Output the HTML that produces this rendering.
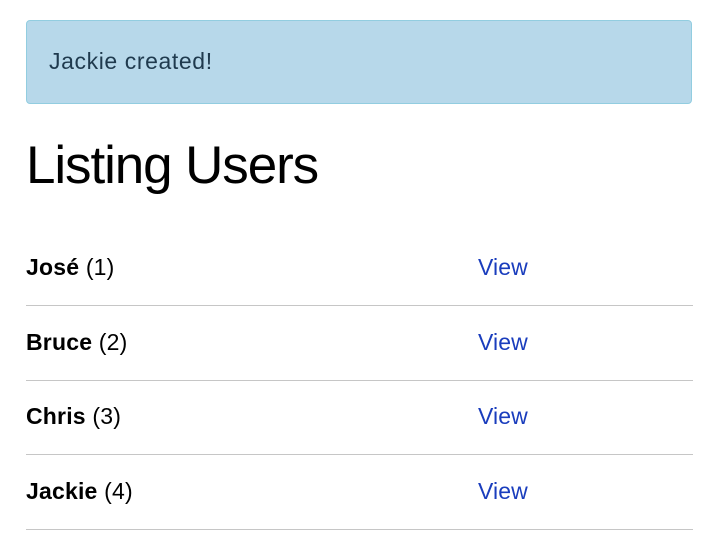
<!DOCTYPE html>
<html><head><meta charset="utf-8"><style>
body{margin:0;background:#fff;font-family:"Liberation Sans",sans-serif;}
.alert{position:absolute;left:26px;top:20px;width:664px;height:82px;background:#b7d8ea;border:1px solid #92cde0;border-radius:4px;}
.alert span{position:absolute;left:22px;top:27px;font-size:23px;color:#1f3a4e;letter-spacing:0.6px}
h1{position:absolute;left:26px;top:139px;margin:0;font-weight:normal;font-size:53px;letter-spacing:-1.1px;color:#000;line-height:1}
.row{position:absolute;left:26px;width:667px;height:74px;border-bottom:1.5px solid #c6c6c6;}
.row .n{position:absolute;left:0;top:23px;font-size:23px;color:#000;letter-spacing:0.2px}
.row .v{position:absolute;left:452px;top:23px;font-size:23px;color:#1a3dbd;letter-spacing:0.1px}
</style></head><body>
<div class="alert"><span>Jackie created!</span></div>
<h1>Listing Users</h1>
<div class="row" style="top:231px"><span class="n"><b>José</b> (1)</span><span class="v">View</span></div>
<div class="row" style="top:306px"><span class="n"><b>Bruce</b> (2)</span><span class="v">View</span></div>
<div class="row" style="top:380px"><span class="n"><b>Chris</b> (3)</span><span class="v">View</span></div>
<div class="row" style="top:455px"><span class="n"><b>Jackie</b> (4)</span><span class="v">View</span></div>
</body></html>
